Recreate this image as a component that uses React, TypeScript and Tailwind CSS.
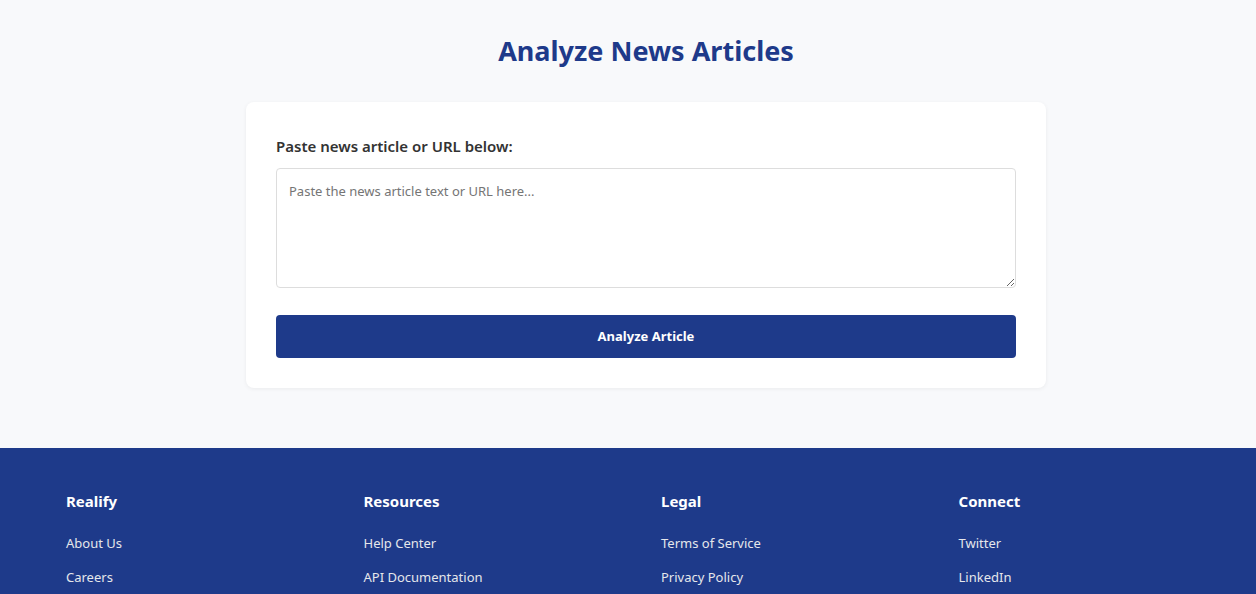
const footerColumns = [
  { title: "Realify", links: ["About Us", "Careers"] },
  { title: "Resources", links: ["Help Center", "API Documentation"] },
  { title: "Legal", links: ["Terms of Service", "Privacy Policy"] },
  { title: "Connect", links: ["Twitter", "LinkedIn"] },
];

export default function App() {
  return (
    <div className="min-h-screen bg-[#f8f9fb] font-['Noto_Sans',sans-serif]">
      <main className="flex flex-col items-center pb-[60px] pl-[36px] pt-[28px]">
        <h1 className="text-[27px] font-bold leading-[46px] text-[#1e3a8a]">
          Analyze News Articles
        </h1>
        <section className="mt-[28px] w-[800px] rounded-lg bg-white px-[30px] pb-[30px] pt-[32px] shadow-[0_1px_4px_rgba(0,0,0,0.06)]">
          <label className="block text-[15px] font-semibold leading-6 text-[#333]">
            Paste news article or URL below:
          </label>
          <textarea
            className="mt-[10px] block h-[120px] w-full rounded border border-[#ddd] px-3 py-[13px] text-[13px] text-[#333] placeholder:text-[#757575]"
            placeholder="Paste the news article text or URL here..."
          />
          <button className="mt-[27px] h-[43px] w-full rounded bg-[#1e3a8a] text-[13px] font-bold text-white">
            Analyze Article
          </button>
        </section>
      </main>
      <footer className="bg-[#1e3a8a] pb-4 pt-[41px]">
        <div className="grid grid-cols-4 pl-[66px]">
          {footerColumns.map((col) => (
            <div key={col.title}>
              <h3 className="text-[15px] font-bold leading-6 text-white">
                {col.title}
              </h3>
              <ul className="mt-[20px] flex flex-col gap-[14px]">
                {col.links.map((link) => (
                  <li
                    className="text-[13px] leading-5 text-[#e5e7eb]"
                    key={link}
                  >
                    {link}
                  </li>
                ))}
              </ul>
            </div>
          ))}
        </div>
      </footer>
    </div>
  );
}
